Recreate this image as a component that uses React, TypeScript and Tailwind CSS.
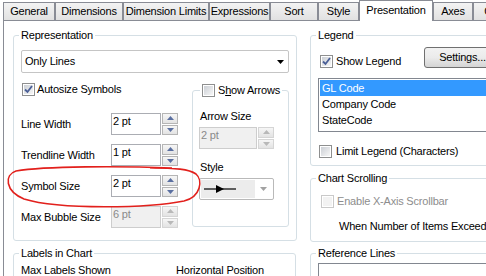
import clsx from "clsx"

const tabs = [
  { label: "General", w: "w-[52px]" },
  { label: "Dimensions", w: "w-[68px]" },
  { label: "Dimension Limits", w: "w-[86px]" },
  { label: "Expressions", w: "w-[61px]" },
  { label: "Sort", w: "w-[48px]" },
  { label: "Style", w: "w-[41px]" },
  { label: "Presentation", w: "w-[74px]", active: true },
  { label: "Axes", w: "w-[40px]" },
  { label: "C", w: "w-[30px]" },
]

function Check({ checked, disabled }: { checked?: boolean; disabled?: boolean }) {
  return (
    <span
      className={clsx(
        "flex h-[13px] w-[13px] shrink-0 items-center justify-center border p-[1px]",
        disabled ? "border-[#c9c9c9] bg-white" : "border-[#8e8f8f] bg-white"
      )}
    >
      <span
        className={clsx(
          "flex h-full w-full items-center justify-center",
          disabled ? "bg-[#f2f2f2]" : "bg-gradient-to-br from-[#cbcfd5] to-[#f7f7f7]"
        )}
      >
        {checked && (
          <svg width="9" height="9" viewBox="0 0 9 9">
            <path d="M1 4.5 L3.5 7 L8 1" fill="none" stroke="#4a5f97" strokeWidth="1.8" />
          </svg>
        )}
      </span>
    </span>
  )
}

function Tri({ up, color }: { up?: boolean; color: string }) {
  return (
    <svg width="7" height="4" viewBox="0 0 7 4">
      <path d={up ? "M0 4 L3.5 0 L7 4 Z" : "M0 0 L7 0 L3.5 4 Z"} fill={color} />
    </svg>
  )
}

function Spin({ value, disabled, wide }: { value: string; disabled?: boolean; wide?: boolean }) {
  const tri = disabled ? "#b8b8b8" : "#5a6fa0"
  return (
    <div className="flex h-[22px]">
      <div
        className={clsx(
          "flex items-start border pl-[1px] pt-[1px]",
          wide ? "w-[58px]" : "w-[50px]",
          disabled ? "border-[#cdcdcd] bg-[#f0f0f0] text-[#8a8a8a]" : "border-[#abadb3] bg-white"
        )}
      >
        {value}
      </div>
      <div className="ml-[1px] flex w-[16px] flex-col gap-[1px]">
        <span
          className={clsx(
            "flex flex-1 items-center justify-center border bg-gradient-to-b from-[#f6f6f6] to-[#e3e3e3]",
            disabled ? "border-[#d5d5d5]" : "border-[#b5b5b5]"
          )}
        >
          <Tri up color={tri} />
        </span>
        <span
          className={clsx(
            "flex flex-1 items-center justify-center border bg-gradient-to-b from-[#f6f6f6] to-[#e3e3e3]",
            disabled ? "border-[#d5d5d5]" : "border-[#b5b5b5]"
          )}
        >
          <Tri color={tri} />
        </span>
      </div>
    </div>
  )
}

function Row({ label, value, disabled }: { label: string; value: string; disabled?: boolean }) {
  return (
    <div className="flex h-[22px] items-center">
      <span className="w-[90px] shrink-0">{label}</span>
      <Spin value={value} disabled={disabled} />
    </div>
  )
}

export default function App() {
  return (
    <div className="relative h-[276px] w-[486px] overflow-hidden bg-white font-['Liberation_Sans',Arial,sans-serif] text-[11px] leading-[13px] tracking-[-0.2px] text-black">
      {/* tab strip */}
      <div className="flex h-[20px] items-end pl-[3px]">
        {tabs.map((t) =>
          t.active ? (
            <div
              key={t.label}
              className={clsx(
                t.w,
                "relative z-10 mb-[-1px] flex h-[21px] shrink-0 items-start justify-center border border-b-0 border-[#898c95] bg-white pt-[3px]"
              )}
            >
              {t.label}
            </div>
          ) : (
            <div
              key={t.label}
              className={clsx(
                t.w,
                "flex h-[18px] shrink-0 items-center justify-center border border-b-0 border-[#898c95] bg-gradient-to-b from-[#f3f3f3] to-[#e1e1e1]"
              )}
            >
              {t.label}
            </div>
          )
        )}
      </div>

      {/* tab page */}
      <div className="ml-[3px] flex gap-[14px] border-l border-t border-[#898c95] pl-[9px] pt-[8px]">
        {/* left column */}
        <div className="flex w-[283px] shrink-0 flex-col">
          <fieldset className="h-[212px] rounded-[3px] border border-[#d5dfe5] px-[7px]">
            <legend className="ml-[-2px] px-[2px]">Representation</legend>
            <div className="mt-[8px] flex h-[23px] items-center justify-between rounded-[2px] border border-[#c5c5c5] bg-white pl-[3px] pr-[4px]">
              <span>Only Lines</span>
              <Tri color="#000" />
            </div>

            <div className="mt-[10px] flex items-start">
              <div className="flex w-[171px] shrink-0 flex-col">
                <label className="ml-[1px] flex items-center gap-[2px]">
                  <Check checked />
                  <span>Autosize Symbols</span>
                </label>
                <div className="mt-[17px] flex flex-col gap-[9px]">
                  <Row label="Line Width" value="2 pt" />
                  <Row label="Trendline Width" value="1 pt" />
                  <Row label="Symbol Size" value="2 pt" />
                  <Row label="Max Bubble Size" value="6 pt" disabled />
                </div>
              </div>

              <fieldset className="mt-[1px] h-[143px] w-[93px] shrink-0 rounded-[3px] border border-[#d5dfe5] px-[6px]">
                <legend className="ml-[1px] flex items-center gap-[3px] whitespace-nowrap px-[2px]">
                  <Check />
                  <span>
                    S<span className="underline">h</span>ow Arrows
                  </span>
                </legend>
                <div className="mt-[13px] pl-[1px]">Arrow Size</div>
                <div className="mt-[4px]">
                  <Spin value="2 pt" disabled wide />
                </div>
                <div className="mt-[12px] pl-[1px]">Style</div>
                <div className="mt-[4px] flex h-[22px] w-[75px] items-center rounded-[2px] border border-[#b9b9b9] bg-white p-[1px]">
                  <div className="flex h-full w-[54px] items-center bg-[#ececec] pl-[3px]">
                    <svg width="34" height="10" viewBox="0 0 34 10">
                      <line x1="0" y1="5" x2="32" y2="5" stroke="#000" strokeWidth="1.2" />
                      <path d="M12 1 L20 5 L12 9 Z" fill="#000" />
                    </svg>
                  </div>
                  <div className="flex flex-1 items-center justify-center">
                    <Tri color="#a2a2a2" />
                  </div>
                </div>
              </fieldset>
            </div>
          </fieldset>

          <fieldset className="mt-[6px] h-[80px] rounded-[3px] border border-[#d5dfe5] px-[7px]">
            <legend className="ml-[-2px] px-[2px]">Labels in Chart</legend>
            <div className="mt-[4px] flex">
              <span className="w-[155px] shrink-0">Max Labels Shown</span>
              <span>Horizontal Position</span>
            </div>
          </fieldset>
        </div>

        {/* right column */}
        <div className="flex w-[200px] shrink-0 flex-col">
          <fieldset className="h-[137px] rounded-[3px] border border-[#d5dfe5] px-[7px]">
            <legend className="ml-[-2px] px-[2px]">Legend</legend>
            <div className="mt-[5px] flex h-[21px] items-start">
              <label className="ml-[2px] mt-[8px] flex w-[104px] shrink-0 items-center gap-[3px]">
                <Check checked />
                <span>Show Legend</span>
              </label>
              <button className="flex h-[21px] w-[76px] shrink-0 items-center justify-center rounded-[3px] border border-[#707070] bg-gradient-to-b from-[#f2f2f2] via-[#ebebeb] to-[#d4d4d4] pl-[1px]">
                Settings...
              </button>
            </div>
            <div className="mt-[10px] h-[54px] w-[200px] border border-[#828790] bg-white p-[1px]">
              <div className="flex h-[16px] items-center bg-[#3399ff] pl-[2px] text-white">GL Code</div>
              <div className="flex h-[16px] items-center pl-[2px]">Company Code</div>
              <div className="flex h-[16px] items-center pl-[2px]">StateCode</div>
            </div>
            <label className="ml-[1px] mt-[13px] flex items-center gap-[4px]">
              <Check />
              <span>Limit Legend (Characters)</span>
            </label>
          </fieldset>

          <fieldset className="mt-[6px] h-[70px] rounded-[3px] border border-[#d5dfe5] px-[7px]">
            <legend className="ml-[-2px] px-[2px]">Chart Scrolling</legend>
            <label className="ml-[3px] mt-[10px] flex items-center gap-[3px] text-[#8d8d8d]">
              <Check disabled />
              <span>Enable X-Axis Scrollbar</span>
            </label>
            <div className="ml-[21px] mt-[12px] whitespace-nowrap">When Number of Items Exceeds</div>
          </fieldset>

          <fieldset className="mt-[5px] h-[60px] rounded-[3px] border border-[#d5dfe5] px-[7px]">
            <legend className="ml-[-2px] px-[2px]">Reference Lines</legend>
            <div className="mt-[3px] h-[40px] w-[200px] border border-[#828790] bg-white" />
          </fieldset>
        </div>
      </div>

      {/* red hand-drawn annotation */}
      <svg className="pointer-events-none absolute left-0 top-0" width="486" height="276" viewBox="0 0 486 276">
        <path
          d="M172 168 C120 166, 45 166, 16 171 C4 175, 5 191, 24 199 C60 210, 150 208, 184 201 C201 197, 203 180, 196 174 C189 169, 176 168, 150 168"
          fill="none"
          stroke="#e2201c"
          strokeWidth="1.6"
        />
      </svg>
    </div>
  )
}
